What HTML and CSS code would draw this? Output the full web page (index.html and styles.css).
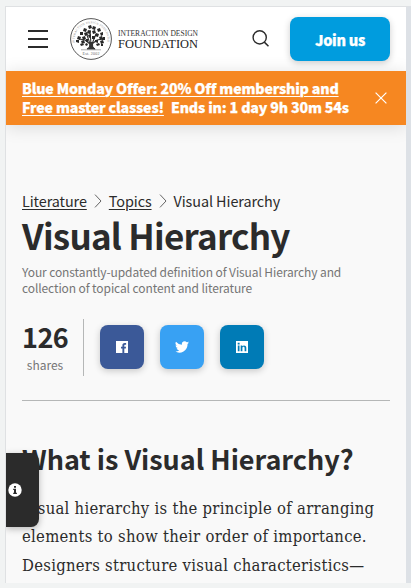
FILE: index.html
```html
<!DOCTYPE html>
<html lang="en">
<head>
<meta charset="utf-8">
<title>Visual Hierarchy</title>
<link rel="stylesheet" href="styles.css">
</head>
<body>
<div class="frame">
  <header class="header">
    <svg class="menu" width="20" height="20" viewBox="0 0 20 20"><path d="M0 2h20M0 10h20M0 18h20" stroke="#2b2b2b" stroke-width="2"/></svg>
    <svg class="seal" width="42" height="42" viewBox="0 0 42 42">
      <circle cx="21" cy="21" r="20.4" fill="none" stroke="#444" stroke-width=".9"/>
      <path id="arc" d="M4.8 25A16.5 16.5 0 1 1 37.2 25" fill="none"/>
      <text class="seal-ring"><textPath href="#arc" textLength="59">INTERACTION DESIGN FOUNDATION</textPath></text>
      <path d="M17 31q3-1 3-5l-5-4-6-1M20 26l-3-9M21 27l-1-15M22 26l4-10M22 26l5-4 6-1M25 31q-3-1-3-5" fill="none" stroke="#333" stroke-width="1.1"/>
      <path d="M19.5 24h3.4l.3 5 2.5 2.4H17l2.3-2z" fill="#333"/>
      <path d="M11 31.8h20" stroke="#888" stroke-width=".7"/>
      <g fill="#292929"><path d="M18 8l3-1 1 3-3 1zM23 8l3 1-1 3-3-1zM14 10l3 1-1 3-3-1zM27 11l3-1 1 3-3 1zM18 12l3 1-1 3-3-1zM22 13l3-1 1 3-3 1zM10 14l3 0 0 3-3 0zM14 15l3-1 1 3-3 1zM26 15l3 1-1 3-3-1zM30 15l3-1 0 3-2 1zM8 18l3 1-1 3-3-1zM12 19l3-1 1 3-3 1zM18 17l3-1 0 3-2 1zM22 18l3 0 0 3-3 0zM29 19l3-1 1 3-3 1zM33 19l2 0 0 3-3 0zM6 22l3 0 0 3-3-1zM11 23l3-1 1 3-3 1zM16 21l2 0 0 3-2 0zM25 22l3 0 0 3-3-1zM30 23l3-1 1 3-3 1zM10 26l3-1 1 2-3 1zM15 26l2-1 1 2-2 1zM26 26l3-1 1 2-3 1zM31 26l2 0 0 2-2 0z"/></g>
      <text class="seal-est" x="21" y="37" text-anchor="middle" textLength="17">Est. 2002</text>
    </svg>
    <svg class="wordmark" width="82" height="28" viewBox="0 0 82 28">
      <text x="0" y="10.500" class="wm-top" textLength="80" lengthAdjust="spacingAndGlyphs">INTERACTION DESIGN</text>
      <text x="0" y="22.900" class="wm-bottom" textLength="80" lengthAdjust="spacingAndGlyphs">FOUNDATION</text>
    </svg>
    <svg class="search" width="18" height="18" viewBox="0 0 18 18"><circle cx="7.7" cy="7.4" r="6.6" fill="none" stroke="#2b2b2b" stroke-width="1.4"/><path d="M12.3 12.1l4.2 4.2" stroke="#2b2b2b" stroke-width="1.5"/></svg>
    <a class="join">Join us</a>
  </header>
  <div class="banner">
    <div class="offer"><div><u class="o1">Blue Monday Offer: 20% Off membership and</u></div><div class="o2"><u>Free master classes!</u><span class="ends">Ends in: 1 day 9h 30m 54s</span></div></div>
    <svg width="12" height="12" viewBox="0 0 12 12"><path d="M.6.6l10.8 10.8M11.4.6L.6 11.4" stroke="#fff" stroke-width="1.2"/></svg>
  </div>
  <main class="content">
    <nav class="crumbs">
      <u>Literature</u><svg width="8" height="14" viewBox="0 0 8 14"><path d="M1 .6L7 7 1 13.4" fill="none" stroke="#555" stroke-width=".9"/></svg><u class="topics">Topics</u><svg width="8" height="14" viewBox="0 0 8 14"><path d="M1 .6L7 7 1 13.4" fill="none" stroke="#555" stroke-width=".9"/></svg><span class="current">Visual Hierarchy</span>
    </nav>
    <h1>Visual Hierarchy</h1>
    <p class="lead">Your constantly-updated definition of Visual Hierarchy and<br>collection of topical content and literature</p>
    <section class="share">
      <div class="count"><b>126</b><span>shares</span></div>
      <div class="buttons">
        <a class="btn fb"><svg width="12" height="12" viewBox="0 0 12 12"><path fill="#fff" fill-rule="evenodd" d="M0 0h12v12H8.3V7.5h1.5L10 5.7H8.3V4.6c0-.6.2-.9.9-.9h.9V2.1H8.700C7.100 2.100 6.400 3 6.400 4.400v1.300H5v1.800h1.400V12H0z"/></svg></a>
        <a class="btn tw"><svg width="14" height="12" viewBox="0 0 24 20"><path fill="#fff" d="M24 2.4a10 10 0 0 1-2.8.8A5 5 0 0 0 23.3.5a10 10 0 0 1-3.1 1.2 4.9 4.9 0 0 0-8.4 4.5A14 14 0 0 1 1.7 1a4.9 4.9 0 0 0 1.5 6.6A5 5 0 0 1 1 7a4.900 4.900 0 0 0 3.900 4.900 5 5 0 0 1-2.200.1 4.900 4.900 0 0 0 4.600 3.400A10 10 0 0 1 0 17.500 14 14 0 0 0 21.500 5 10 10 0 0 0 24 2.400z"/></svg></a>
        <a class="btn li"><svg width="12" height="12" viewBox="0 0 12 12"><path fill="#fff" fill-rule="evenodd" d="M0 0h12v12H0zM1.800 4.500h1.700v5.700H1.800zM1.700 1.700h1.900v1.800H1.700zM4.700 4.500h1.600v.8c.9-1.500 4-1.200 4 1.400v3.500H8.600V7c0-1.600-2.200-1.500-2.200 0v3.200H4.700z"/></svg></a>
      </div>
    </section>
    <h2>What is Visual Hierarchy?</h2>
    <p class="body"><span class="l1">Visual hierarchy is the principle of arranging</span><span class="l2">elements to show their order of importance.</span><span class="l3">Designers structure visual characteristics—</span></p>
  </main>
  <aside class="info"><svg width="14" height="14" viewBox="0 0 14 14"><circle cx="7" cy="7" r="6.700" fill="#fff"/><path d="M6 3h2v1.700H6zM5.200 5.800H8v4h.9V11H5.200V9.800H6V7h-.8z" fill="#2b2b2b"/></svg></aside>
</div>
</body>
</html>
```
FILE: styles.css
```css
* { box-sizing: border-box; }
body {
  margin: 0;
  height: 588px;
  overflow: hidden;
  padding: 6px 0 5px 5px;
  background: #f1f3f3;
  color: #2b2b2b;
  font-family: "Noto Sans CJK SC", "Noto Sans", sans-serif;
}
svg { display: block; flex: none; overflow: visible; }
u { text-decoration-thickness: 1px; text-underline-offset: 2px; }
.frame {
  position: relative;
  height: 577px;
  overflow: hidden;
  border-top: 1px solid #dfe1e3;
  border-left: 1px solid #dfe1e3;
  border-right: 5px solid #dde1e6;
  background: #f9f9f9;
}
.header {
  height: 64px;
  display: flex;
  align-items: center;
  padding: 0 16px 0 22px;
  background: #fff;
}
.seal { margin-left: 22px; }
.seal-ring { font: 3px "Liberation Serif", serif; fill: #888; }
.seal-est { font: 4px "Liberation Serif", serif; fill: #666; }
.wordmark { margin-left: 6px; }
.wm-top { font: 7.600px "Liberation Serif", serif; fill: #333; }
.wm-bottom { font: 13px "Liberation Serif", serif; fill: #222; }
.search { margin-left: auto; }
.join {
  width: 100px;
  height: 44px;
  margin-left: 20px;
  border-radius: 8px;
  background: #009cde;
  color: #fff;
  font-size: 14.500px;
  font-weight: 900;
  line-height: 45px;
  letter-spacing: -.3px;
  -webkit-text-stroke: .25px #fff;
  text-align: center;
  box-shadow: 0 2px 7px #0003;
}
.banner {
  height: 54px;
  display: flex;
  align-items: center;
  justify-content: space-between;
  padding: 0 19px 0 16px;
  background: #f68721;
  color: #fff;
  font-size: 14.200px;
  font-weight: 900;
  line-height: 19px;
  letter-spacing: -.17px;
  -webkit-text-stroke: .25px #fff;
  white-space: nowrap;
  box-shadow: 0 2px 18px #0002;
}
.ends { margin-left: 7px; }
.content { padding: 65px 16px 0; }
.crumbs {
  display: flex;
  align-items: center;
  height: 22px;
  font-size: 14.400px;
  font-weight: 400;
  line-height: 22px;
  letter-spacing: -.08px;
  white-space: nowrap;
}
.crumbs svg { margin: 0 7px; }
h1 {
  margin: 0;
  font-size: 35px;
  line-height: 46px;
  letter-spacing: -.75px;
  white-space: nowrap;
}
.lead {
  margin: 6px 0 0;
  color: #757575;
  font-size: 12px;
  line-height: 16px;
  letter-spacing: -.1px;
  white-space: nowrap;
}
.share {
  display: flex;
  height: 82px;
  margin-top: 23px;
  border-bottom: 1px solid #b5b7b7;
}
.count {
  width: 62px;
  height: 57px;
  border-right: 1px solid #b5b7b7;
  padding-right: 15px;
  text-align: center;
}
.count b { display: block; font-size: 27px; line-height: 36px; letter-spacing: -.5px; }
.count span { display: block; color: #757575; font-size: 12px; line-height: 19px; }
.buttons { display: flex; gap: 16px; padding: 6px 0 0 16px; }
.btn {
  display: flex;
  align-items: center;
  justify-content: center;
  width: 44px;
  height: 44px;
  border-radius: 8px;
  box-shadow: 0 2px 7px #0003;
}
.fb { background: #3b5998; }
.tw { background: #38a1f3; }
.li { background: #007bb6; }
h2 {
  margin: 39px 0 0;
  font-size: 27px;
  line-height: 38px;
  letter-spacing: -.03px;
  white-space: nowrap;
}
.body {
  margin: 17px 0 0;
  font: 16.500px/28.400px "DejaVu Serif Condensed", "DejaVu Serif", serif;
  font-stretch: condensed;
  letter-spacing: .28px;
  white-space: nowrap;
}
.body span { display: block; }
.info {
  position: absolute;
  left: 0;
  top: 446px;
  width: 33px;
  height: 74px;
  padding-left: 2px;
  display: flex;
  align-items: center;
  border-radius: 0 8px 8px 0;
  background: #2b2b2b;
  box-shadow: 0 2px 7px #0004;
}
```
